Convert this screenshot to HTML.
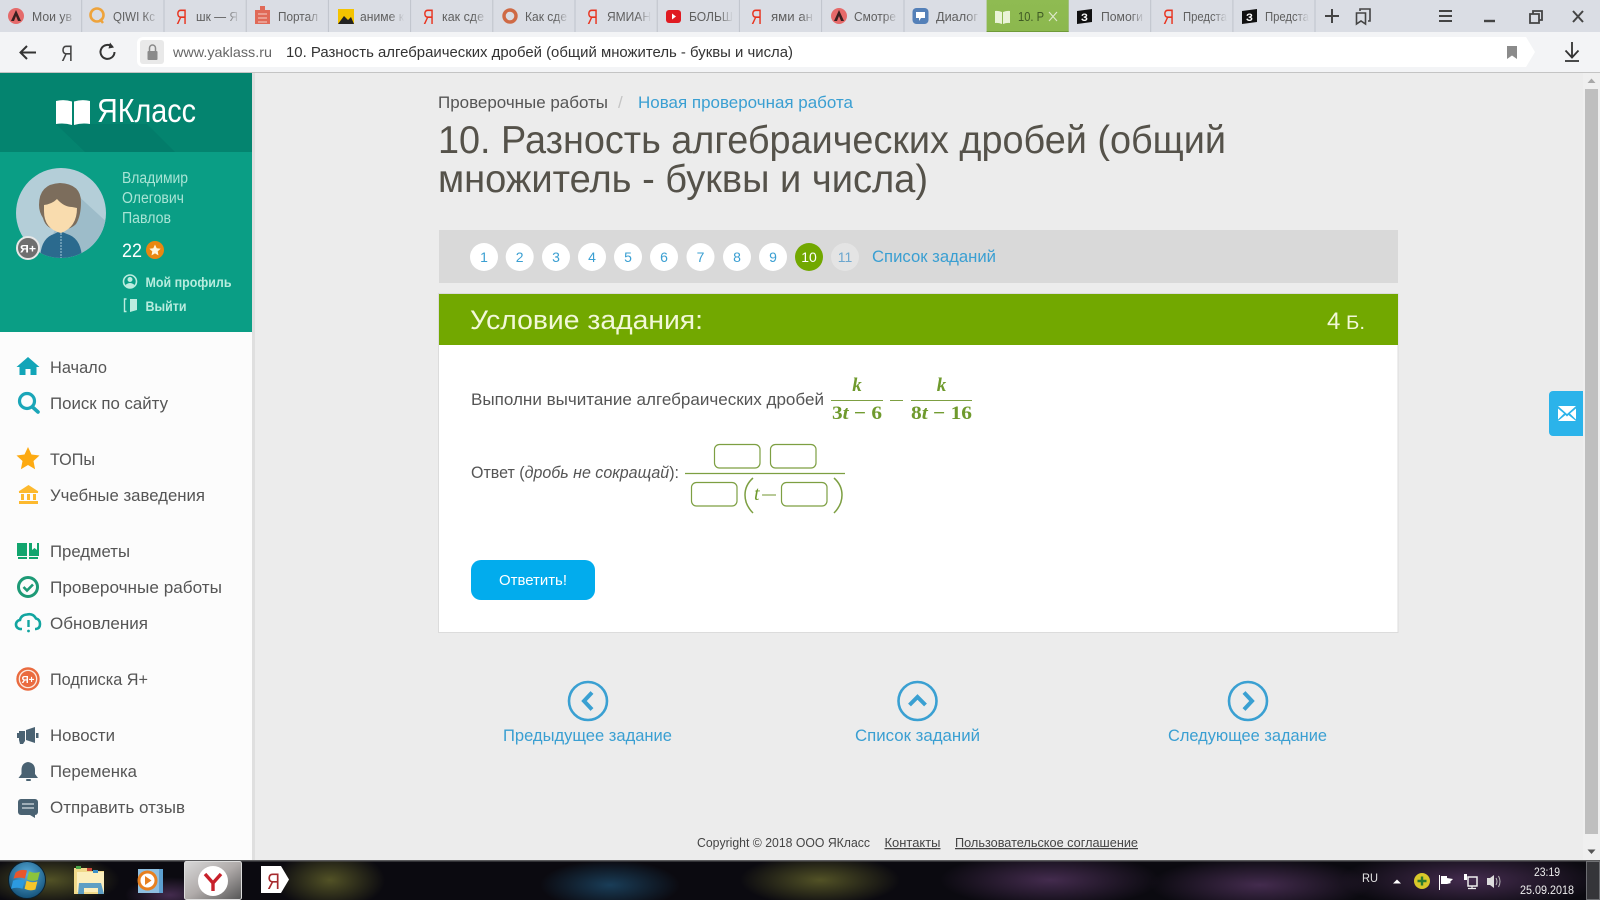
<!DOCTYPE html>
<html lang="ru"><head><meta charset="utf-8"><title>ЯКласс</title>
<style>
html,body{margin:0;padding:0;background:#ececec;width:1600px;height:900px;overflow:hidden}
svg{display:block}
text{font-family:"Liberation Sans","DejaVu Sans",sans-serif}
.tab{font-size:12.5px;fill:#5f5f5f}
.m{font-size:17px;fill:#555}
.b{fill:#3a9fd2}
.n{font-size:14px;fill:#3a9fd2;text-anchor:middle}
.math{font-family:"Liberation Serif",serif;font-weight:bold;fill:#6f9a2d;font-size:19px}
.inp{fill:#fff;stroke:#7d9f42;stroke-width:1.2}
</style></head><body>
<svg width="1600" height="900" viewBox="0 0 1600 900" xmlns="http://www.w3.org/2000/svg">
<defs>
<linearGradient id="f"><stop offset="0" stop-color="#dadde4" stop-opacity="0"/><stop offset=".75" stop-color="#dadde4"/></linearGradient>
<linearGradient id="act" x1="0" y1="0" x2="0" y2="1"><stop offset="0" stop-color="#8fbb52"/><stop offset="1" stop-color="#8cb84e"/></linearGradient>
<linearGradient id="tile" x1="0" y1="0" x2="1" y2="1"><stop offset="0" stop-color="#d8d8d8"/><stop offset=".5" stop-color="#b0abaa"/><stop offset="1" stop-color="#555"/></linearGradient>
<radialGradient id="orb" cx=".5" cy=".35" r=".7"><stop offset="0" stop-color="#58aede"/><stop offset="1" stop-color="#0f4a70"/></radialGradient>
<radialGradient id="o1"><stop offset="0" stop-color="#5a5a28" stop-opacity=".9"/><stop offset="1" stop-color="#5a5a28" stop-opacity="0"/></radialGradient>
<radialGradient id="o2"><stop offset="0" stop-color="#4a2f55" stop-opacity=".9"/><stop offset="1" stop-color="#4a2f55" stop-opacity="0"/></radialGradient>
<radialGradient id="o3"><stop offset="0" stop-color="#1d4a6a" stop-opacity=".8"/><stop offset="1" stop-color="#1d4a6a" stop-opacity="0"/></radialGradient>
<clipPath id="av"><circle cx="61" cy="213" r="45"/></clipPath>
<clipPath id="tb"><rect x="0" y="860" width="1600" height="40"/></clipPath>
</defs>

<!-- page background -->
<rect width="1600" height="900" fill="#ececec"/>

<!-- tab strip -->
<rect width="1600" height="32" fill="#dadde4"/>
<g stroke="#bfc3cb" stroke-width="1">
<path d="M81.7 0V32M164 0V32M246.2 0V32M328.4 0V32M410.6 0V32M492.8 0V32M575 0V32M657.2 0V32M739.4 0V32M821.6 0V32M904 0V32M1150.7 0V32M1232.9 0V32M1315 0V32M1068.5 0V32"/>
</g>
<rect x="986.6" y="0" width="82" height="32" fill="url(#act)"/>
<rect x="986.6" y="31" width="82" height="1" fill="#6f9a38"/>

<text class="tab" x="32" y="21" textLength="40" lengthAdjust="spacingAndGlyphs">Мои ув</text>
<text class="tab" x="113" y="21" textLength="42" lengthAdjust="spacingAndGlyphs">QIWI Кс</text>
<text class="tab" x="196" y="21" textLength="42" lengthAdjust="spacingAndGlyphs">шк — Я</text>
<text class="tab" x="278" y="21" textLength="40" lengthAdjust="spacingAndGlyphs">Портал</text>
<text class="tab" x="360" y="21" textLength="44" lengthAdjust="spacingAndGlyphs">аниме к</text>
<text class="tab" x="442" y="21" textLength="42" lengthAdjust="spacingAndGlyphs">как сде</text>
<text class="tab" x="525" y="21" textLength="42" lengthAdjust="spacingAndGlyphs">Как сде</text>
<text class="tab" x="607" y="21" textLength="44" lengthAdjust="spacingAndGlyphs">ЯМИАН</text>
<text class="tab" x="689" y="21" textLength="44" lengthAdjust="spacingAndGlyphs">БОЛЬШ</text>
<text class="tab" x="771" y="21" textLength="42" lengthAdjust="spacingAndGlyphs">ями ан</text>
<text class="tab" x="854" y="21" textLength="42" lengthAdjust="spacingAndGlyphs">Смотре</text>
<text class="tab" x="936" y="21" textLength="42" lengthAdjust="spacingAndGlyphs">Диалог</text>
<text class="tab" x="1101" y="21" textLength="42" lengthAdjust="spacingAndGlyphs">Помоги</text>
<text class="tab" x="1183" y="21" textLength="44" lengthAdjust="spacingAndGlyphs">Предста</text>
<text class="tab" x="1265" y="21" textLength="44" lengthAdjust="spacingAndGlyphs">Предста</text>
<g fill="url(#f)">
<rect x="62" y="2" width="19" height="29"/><rect x="144" y="2" width="19" height="29"/><rect x="226" y="2" width="19" height="29"/><rect x="308" y="2" width="19" height="29"/><rect x="390" y="2" width="19" height="29"/><rect x="473" y="2" width="19" height="29"/><rect x="555" y="2" width="19" height="29"/><rect x="637" y="2" width="19" height="29"/><rect x="719" y="2" width="19" height="29"/><rect x="801" y="2" width="19" height="29"/><rect x="884" y="2" width="19" height="29"/><rect x="966" y="2" width="19" height="29"/><rect x="1131" y="2" width="19" height="29"/><rect x="1213" y="2" width="19" height="29"/><rect x="1295" y="2" width="19" height="29"/>
</g>
<text x="1018" y="21" font-size="12.5" fill="#3f5a24" textLength="26" lengthAdjust="spacingAndGlyphs">10. Р</text>
<path d="M1049 12l8 9M1057 12l-8 9" stroke="#dfe9cc" stroke-width="1.100"/>

<!-- tab icons -->
<circle cx="16" cy="16" r="8" fill="#e56a6a"/><path d="M16 10l-5 11h3l2-5 2 5h3z" fill="#3a2020"/>
<circle cx="97" cy="15" r="6.5" fill="none" stroke="#eea33b" stroke-width="2.6"/><path d="M100 19l3 4" stroke="#eea33b" stroke-width="2.4"/>
<text x="176" y="24" font-size="21" fill="#e8331f" textLength="11" lengthAdjust="spacingAndGlyphs">Я</text>
<rect x="255" y="10" width="15" height="14" fill="#e06a58"/><rect x="260" y="6" width="5" height="5" fill="#e06a58"/><path d="M258 14h9M258 18h9M258 22h9" stroke="#f5d0c8"/>
<rect x="338" y="9" width="16" height="15" fill="#f4c300"/><path d="M338 24l6-8 4 4 3-3 3 7z" fill="#222"/>
<text x="423" y="24" font-size="21" fill="#e8331f" textLength="11" lengthAdjust="spacingAndGlyphs">Я</text>
<circle cx="510" cy="16" r="6" fill="none" stroke="#cf6a45" stroke-width="3.4"/>
<text x="587" y="24" font-size="21" fill="#e8331f" textLength="11" lengthAdjust="spacingAndGlyphs">Я</text>
<rect x="666" y="10" width="15" height="13" rx="3" fill="#e01b22"/><path d="M672 13.5l4 3-4 3z" fill="#fff"/>
<text x="751" y="24" font-size="21" fill="#e8331f" textLength="11" lengthAdjust="spacingAndGlyphs">Я</text>
<circle cx="839" cy="16" r="8" fill="#e56a6a"/><path d="M839 10l-5 11h3l2-5 2 5h3z" fill="#3a2020"/>
<rect x="912.500" y="8" width="16" height="16" rx="4" fill="#5480b8"/><path d="M916 12h9v6h-4l-2 3v-3h-3z" fill="#fff"/>
<path d="M995 11q3-.5 7 1v12q-4-1.500-7-1zM1010 11q-3-.5-7 1v12q4-1.500 7-1z" fill="#eaf3d8"/>
<path d="M1077 11l15-2v13l-15 2z" fill="#111"/><text x="1081" y="21" font-size="11" font-weight="bold" fill="#fff">З</text>
<text x="1163" y="24" font-size="21" fill="#e8331f" textLength="11" lengthAdjust="spacingAndGlyphs">Я</text>
<path d="M1242 11l15-2v13l-15 2z" fill="#111"/><text x="1246" y="21" font-size="11" font-weight="bold" fill="#fff">З</text>

<!-- window controls -->
<path d="M1332 9V23M1325 16H1339" stroke="#444" stroke-width="2"/>
<path d="M1360 11V9h10v12h-2M1356.500 13h9v11l-4.500-3-4.500 3z" fill="none" stroke="#444" stroke-width="1.600"/>
<path d="M1439 11h13M1439 16h13M1439 21h13" stroke="#444" stroke-width="2"/>
<path d="M1484 21h11" stroke="#444" stroke-width="2.400"/>
<path d="M1530 14h9v9h-9zM1533 14v-3h9v9h-3" fill="none" stroke="#444" stroke-width="1.800"/>
<path d="M1573 11l10 11M1583 11l-10 11" stroke="#444" stroke-width="2"/>

<!-- address bar -->
<rect y="32" width="1600" height="40" fill="#f3f4f6"/>
<rect y="72" width="1600" height="1" fill="#c4c4c4"/>
<path d="M143 37H1526L1535 52L1526 67H143a6 6 0 0 1-6-6V43a6 6 0 0 1 6-6z" fill="#fff"/>
<rect x="140" y="40" width="24" height="24" rx="3" fill="#e9e9e9"/>
<rect x="147.500" y="51" width="10" height="9" rx="1" fill="#8a8a8a"/><path d="M149.500 51v-3a3 3 0 0 1 6 0v3" fill="none" stroke="#8a8a8a" stroke-width="1.500"/>
<path d="M36 52.500H21M27 46l-6.500 6.500 6.500 6.500" fill="none" stroke="#333" stroke-width="2"/>
<text x="61" y="61" font-size="22" fill="#444" textLength="12" lengthAdjust="spacingAndGlyphs">Я</text>
<path d="M112.500 47a7 7 0 1 0 2 5" fill="none" stroke="#333" stroke-width="2"/><path d="M110 42.500l4 5-5.500 1z" fill="#333"/>
<text x="173" y="57" font-size="14" fill="#666" textLength="99" lengthAdjust="spacingAndGlyphs">www.yaklass.ru</text>
<text x="286" y="57" font-size="14.500" fill="#333" textLength="507" lengthAdjust="spacingAndGlyphs">10. Разность алгебраических дробей (общий множитель - буквы и числа)</text>
<path d="M1507 46h10v13l-5-3.500-5 3.500z" fill="#8b8b8b"/>
<path d="M1572 42V57M1565.500 50.500l6.500 7 6.500-7M1565 61h14" fill="none" stroke="#333" stroke-width="1.800"/>

<!-- sidebar -->
<rect x="252" y="73" width="3" height="787" fill="#dfdfdf"/>
<rect x="0" y="73" width="252" height="787" fill="#fcfcfc"/>
<rect x="0" y="73" width="252" height="79" fill="#04846f"/>
<path d="M56 124L85 152H175L147 124z" fill="#037766" opacity=".55"/>
<path d="M56 101q8-2 16 .5V125q-8-2.500-16-1zM90 101q-8-2-16 .5V125q8-2.500 16-1z" fill="#fff"/>
<text x="97" y="122" font-size="33" fill="#fff" textLength="99" lengthAdjust="spacingAndGlyphs">ЯКласс</text>
<rect x="0" y="152" width="252" height="180" fill="#0a9e85"/>

<!-- avatar -->
<circle cx="61" cy="213" r="45" fill="#b4ced8"/>
<g clip-path="url(#av)">
<path d="M74 192L110 225V260H70L50 240z" fill="#9dbcc9"/>
<path d="M40 258q1-20 14-24l6-3 7 3q14 4 15 24z" fill="#2b6a8e"/>
<path d="M61 233v25" stroke="#a4c8d8" stroke-width="1" stroke-dasharray="2 1"/>
</g>
<path d="M39 205q0-21 21-22 21 1 21 19 0 14-5 22-6 6-16 6-14 0-17-12-4-6-4-13z" fill="#7c6d5c"/>
<path d="M44 205q8-1 13-6 7 8 15 8l5 1q0 19-16 25-17-4-17-22z" fill="#f9dcae"/>
<circle cx="28" cy="248" r="11" fill="#6f6f6f" stroke="#e8e8e8" stroke-width="2"/>
<text x="20" y="252.500" font-size="11" font-weight="bold" fill="#fff" textLength="16" lengthAdjust="spacingAndGlyphs">Я+</text>

<g fill="#a8e4d5" font-size="15.500">
<text x="122" y="183" textLength="66" lengthAdjust="spacingAndGlyphs">Владимир</text>
<text x="122" y="203" textLength="62" lengthAdjust="spacingAndGlyphs">Олегович</text>
<text x="122" y="223" textLength="49" lengthAdjust="spacingAndGlyphs">Павлов</text>
</g>
<text x="122" y="257" font-size="19" fill="#fff" textLength="20" lengthAdjust="spacingAndGlyphs">22</text>
<circle cx="155" cy="250" r="9" fill="#e98711"/>
<path d="M155 244.500l1.700 3.700 4 .5-3 2.700.8 4-3.500-2-3.500 2 .8-4-3-2.700 4-.5z" fill="#fff4dd"/>
<circle cx="130" cy="281.500" r="6.500" fill="none" stroke="#bcecdf" stroke-width="1.600"/><circle cx="130" cy="279.500" r="2.500" fill="#bcecdf"/><path d="M125.500 285q4.500-4 9 0l-2 2.500h-5z" fill="#bcecdf"/>
<text x="145.500" y="287" font-size="14" font-weight="bold" fill="#b8ecde" textLength="86" lengthAdjust="spacingAndGlyphs">Мой профиль</text>
<path d="M126.500 299h-2v12.500h2" fill="none" stroke="#bcecdf" stroke-width="1.400"/><path d="M130 299h7v11l-7 2z" fill="#bcecdf"/>
<text x="145.500" y="311" font-size="14" font-weight="bold" fill="#b8ecde" textLength="41" lengthAdjust="spacingAndGlyphs">Выйти</text>

<!-- menu -->
<g class="menu">
<text class="m" x="50" y="373" textLength="57" lengthAdjust="spacingAndGlyphs">Начало</text>
<text class="m" x="50" y="409" textLength="118" lengthAdjust="spacingAndGlyphs">Поиск по сайту</text>
<text class="m" x="50" y="465" textLength="45" lengthAdjust="spacingAndGlyphs">ТОПы</text>
<text class="m" x="50" y="501" textLength="155" lengthAdjust="spacingAndGlyphs">Учебные заведения</text>
<text class="m" x="50" y="557" textLength="80" lengthAdjust="spacingAndGlyphs">Предметы</text>
<text class="m" x="50" y="593" textLength="172" lengthAdjust="spacingAndGlyphs">Проверочные работы</text>
<text class="m" x="50" y="629" textLength="98" lengthAdjust="spacingAndGlyphs">Обновления</text>
<text class="m" x="50" y="685" textLength="98" lengthAdjust="spacingAndGlyphs">Подписка Я+</text>
<text class="m" x="50" y="741" textLength="65" lengthAdjust="spacingAndGlyphs">Новости</text>
<text class="m" x="50" y="777" textLength="87" lengthAdjust="spacingAndGlyphs">Переменка</text>
<text class="m" x="50" y="813" textLength="135" lengthAdjust="spacingAndGlyphs">Отправить отзыв</text>
</g>
<path d="M16.500 367L28 357l11.500 10H36.500v8h-6v-6h-5v6h-6v-8z" fill="#12a5b8"/>
<circle cx="27" cy="401" r="7.500" fill="none" stroke="#1ba6b8" stroke-width="3.200"/><path d="M32.500 407l5.500 5" stroke="#1ba6b8" stroke-width="3.600" stroke-linecap="round"/>
<path d="M28 447l3.500 7.500 8 1-6 5.500 1.600 8.200L28 465l-7.100 4.200 1.600-8.200-6-5.500 8-1z" fill="#fdaa12"/>
<path d="M28.500 485l10 6.500h-20z M19 491.500h19v1.500H19z M21 494h3v6h-3zM27 494h3v6h-3zM33 494h3v6h-3z M19 501h19v3H19z" fill="#fdb92e"/>
<path d="M17 543h10v13H17zM29 543h3v7l2.500-2 2.500 2v-7h2v13H29z" fill="#12a56e"/><path d="M18 558h9M29 558h9" stroke="#12a56e" stroke-width="2"/>
<circle cx="28" cy="587" r="9.500" fill="none" stroke="#1d9a76" stroke-width="3"/><path d="M23.500 587l3.500 3.500 6-6" fill="none" stroke="#1d9a76" stroke-width="2.600"/>
<g transform="translate(1 0)"><path d="M21 629h-1a4.500 4.500 0 0 1 -1-9q1-5 7-5.500 6-1.500 9 4 4 1 4 5.500t-4 5h-1" fill="none" stroke="#12a5a0" stroke-width="2.600"/><path d="M27.500 620v7" stroke="#12a5a0" stroke-width="2.400"/><circle cx="27.500" cy="631" r="1.400" fill="#12a5a0"/></g>
<circle cx="28" cy="679" r="10.500" fill="#fbe9df" stroke="#ea6b3f" stroke-width="2.400"/><circle cx="28" cy="679" r="8" fill="#ea6b3f"/>
<text x="21.500" y="683" font-size="10" font-weight="bold" fill="#fff" textLength="13" lengthAdjust="spacingAndGlyphs">Я+</text>
<path d="M19 731h6v10l-2 3h-3l-1-4zM26 730l9-3v16l-9-3z" fill="#4a6272"/><rect x="17" y="733" width="2" height="5" fill="#4a6272"/><rect x="36" y="733" width="2.500" height="5" fill="#4a6272"/>
<path d="M28 762q7 1 7 8v4l3 4H18.500l3-4v-4q0-7 6.500-8z" fill="#4a6272"/><rect x="26" y="779" width="5" height="2" rx="1" fill="#4a6272"/>
<rect x="18" y="799" width="20" height="16" rx="3" fill="#4a6272"/><path d="M30 815h5v3z" fill="#4a6272"/><path d="M22 804h12M22 808h12" stroke="#bcc8ce" stroke-width="1.400"/>

<!-- breadcrumb + title -->
<text x="438" y="108" font-size="17" fill="#555" textLength="170" lengthAdjust="spacingAndGlyphs">Проверочные работы</text>
<text x="618" y="108" font-size="17" fill="#c4c4c4">/</text>
<text class="b" x="638" y="108" font-size="17" textLength="215" lengthAdjust="spacingAndGlyphs">Новая проверочная работа</text>
<text x="438" y="153" font-size="38.500" fill="#55524a" textLength="788" lengthAdjust="spacingAndGlyphs">10. Разность алгебраических дробей (общий</text>
<text x="438" y="192" font-size="38.500" fill="#55524a" textLength="490" lengthAdjust="spacingAndGlyphs">множитель - буквы и числа)</text>

<!-- task pager -->
<rect x="439" y="230" width="959" height="53" fill="#d9d9d9"/>
<g fill="#fff">
<circle cx="484" cy="257" r="14"/><circle cx="519.700" cy="257" r="14"/><circle cx="556" cy="257" r="14"/><circle cx="592" cy="257" r="14"/><circle cx="628" cy="257" r="14"/><circle cx="664" cy="257" r="14"/><circle cx="700.500" cy="257" r="14"/><circle cx="737" cy="257" r="14"/><circle cx="773" cy="257" r="14"/>
</g>
<circle cx="809" cy="257" r="14" fill="#72a800"/>
<circle cx="845" cy="257" r="14" fill="#e4e4e4"/>
<text class="n" x="484" y="262">1</text><text class="n" x="519.700" y="262">2</text><text class="n" x="556" y="262">3</text><text class="n" x="592" y="262">4</text><text class="n" x="628" y="262">5</text><text class="n" x="664" y="262">6</text><text class="n" x="700.500" y="262">7</text><text class="n" x="737" y="262">8</text><text class="n" x="773" y="262">9</text>
<text class="n" x="809" y="262" style="fill:#fff">10</text><text class="n" x="845" y="262" style="fill:#6ca7cf">11</text>
<text class="b" x="872" y="262" font-size="17" textLength="124" lengthAdjust="spacingAndGlyphs">Список заданий</text>

<!-- task card -->
<rect x="438.500" y="293.500" width="959.500" height="339" fill="#fff" stroke="#dcdcdc"/>
<rect x="439" y="294" width="959" height="51" fill="#72a800"/>
<text x="470" y="329" font-size="26.500" fill="#f2f8d8" textLength="233" lengthAdjust="spacingAndGlyphs">Условие задания:</text>
<text x="1327" y="329" font-size="24" fill="#f2f8d8">4</text>
<text x="1346" y="329" font-size="19" fill="#f2f8d8" textLength="19" lengthAdjust="spacingAndGlyphs">Б.</text>

<text class="m" x="471" y="405" textLength="353" lengthAdjust="spacingAndGlyphs">Выполни вычитание алгебраических дробей</text>
<text class="math" x="857" y="391" text-anchor="middle" font-style="italic">k</text>
<path d="M831 400.500H883M890 400.500H903M911 400.500H972" stroke="#7d9f42" stroke-width="1"/>
<text class="math" x="832" y="419" textLength="50" lengthAdjust="spacingAndGlyphs">3<tspan font-style="italic">t</tspan> − 6</text>
<text class="math" x="941.500" y="391" text-anchor="middle" font-style="italic">k</text>
<text class="math" x="911" y="419" textLength="61" lengthAdjust="spacingAndGlyphs">8<tspan font-style="italic">t</tspan> − 16</text>

<text class="m" x="471" y="478" textLength="208" lengthAdjust="spacingAndGlyphs">Ответ (<tspan font-style="italic">дробь не сокращай</tspan>):</text>
<path d="M685 473.500H845" stroke="#7d9f42" stroke-width="1.200"/>
<rect class="inp" x="714.500" y="444.500" width="45.500" height="23.500" rx="5"/>
<rect class="inp" x="770.500" y="444.500" width="45.500" height="23.500" rx="5"/>
<rect class="inp" x="691.500" y="482.500" width="45.500" height="23.500" rx="5"/>
<rect class="inp" x="781.500" y="482.500" width="45.500" height="23.500" rx="5"/>
<path d="M753 478q-8 7-8 17t8 18M834 478q8 7 8 17t-8 18" fill="none" stroke="#7d9f42" stroke-width="1.500"/>
<text x="754" y="500" font-size="20" font-style="italic" fill="#6f9a2d" style="font-family:'Liberation Serif',serif">t</text>
<path d="M762 495h14" stroke="#7d9f42" stroke-width="1.100"/>

<rect x="471" y="560" width="124" height="40" rx="10" fill="#02aced"/>
<text x="499" y="585" font-size="14.500" fill="#fff" textLength="68" lengthAdjust="spacingAndGlyphs">Ответить!</text>

<!-- prev/list/next -->
<g fill="none" stroke="#3aa0d2" stroke-width="2.600">
<circle cx="588" cy="701" r="19"/><circle cx="917.500" cy="701" r="19"/><circle cx="1248" cy="701" r="19"/>
</g>
<g fill="none" stroke="#3aa0d2" stroke-width="4">
<path d="M592 692.500l-8 8.500 8 8.500"/><path d="M909.500 705l8-8 8 8"/><path d="M1244 692.500l8 8.500-8 8.500"/>
</g>
<g class="b" font-size="17">
<text x="503" y="741" textLength="169" lengthAdjust="spacingAndGlyphs">Предыдущее задание</text>
<text x="855" y="741" textLength="125" lengthAdjust="spacingAndGlyphs">Список заданий</text>
<text x="1168" y="741" textLength="159" lengthAdjust="spacingAndGlyphs">Следующее задание</text>
</g>
<g font-size="12.500" fill="#444">
<text x="697" y="847" textLength="173" lengthAdjust="spacingAndGlyphs">Copyright © 2018 ООО ЯКласс</text>
<text x="884.500" y="847" textLength="56" lengthAdjust="spacingAndGlyphs" text-decoration="underline">Контакты</text>
<text x="955" y="847" textLength="183" lengthAdjust="spacingAndGlyphs" text-decoration="underline">Пользовательское соглашение</text>
</g>

<!-- mail button, scrollbar -->
<path d="M1583 391H1553a4 4 0 0 0-4 4v37a4 4 0 0 0 4 4h30z" fill="#2bb3ea"/>
<path d="M1558 406h18l-9 8zM1558 408.500l6 5-6 6zM1576 408.500l-6 5 6 6zM1558 421l7.500-6 1.500 1.500 1.500-1.500 7.500 6z" fill="#fff"/>
<rect x="1583" y="73" width="17" height="787" fill="#efefef"/>
<rect x="1585" y="89" width="13" height="745" fill="#bfbfbf"/>
<path d="M1587.500 83l4-4.500 4 4.500z" fill="#a8a8a8"/>
<path d="M1587.500 849.500l4 4.500 4-4.500z" fill="#555"/>

<!-- taskbar -->
<rect y="860" width="1600" height="40" fill="#0b0a10"/>
<g clip-path="url(#tb)">
<ellipse cx="50" cy="880" rx="70" ry="26" fill="url(#o1)"/>
<ellipse cx="170" cy="895" rx="45" ry="18" fill="url(#o2)"/>
<ellipse cx="330" cy="880" rx="55" ry="30" fill="url(#o1)"/>
<ellipse cx="610" cy="885" rx="70" ry="25" fill="url(#o3)"/>
<ellipse cx="820" cy="880" rx="80" ry="26" fill="url(#o1)"/>
<ellipse cx="1050" cy="880" rx="110" ry="28" fill="url(#o2)"/>
<ellipse cx="1260" cy="885" rx="110" ry="28" fill="url(#o2)"/>
<ellipse cx="1470" cy="880" rx="130" ry="30" fill="url(#o2)"/>
</g>
<rect y="860" width="1600" height="1.500" fill="#5a5a5c"/>
<circle cx="27" cy="880" r="18.500" fill="url(#orb)" stroke="#0a2030" stroke-width="1"/>
<g transform="translate(27 880) scale(1.350) translate(-25 -881)"><path d="M16.500 875.500q4-3 8.500-1.500l-1.500 6q-4-1.500-8.500 0z" fill="#e8562b"/><path d="M26.500 874.500q4 2 8 .5l-1.500 6q-4 1.500-8-.500z" fill="#8cc43c"/><path d="M14.700 881.500q4-1.500 8.500 0l-1.500 6q-4-1.500-8.500 0z" fill="#2c9ae0"/><path d="M24.700 881.500q4 2 8 .5l-1.500 6q-4 1.500-8-.500z" fill="#f6c52a"/></g>
<path d="M74 868h14l2 3h14v23H74z" fill="#f0d98a"/><rect x="77" y="872" width="27" height="20" fill="#fbeebc"/><path d="M79 883h22l3 11h-6v-6H84v6h-6z" fill="#5d9ec4"/>
<rect x="76" y="866" width="5" height="3" fill="#4ca84a"/><rect x="87" y="868" width="5" height="3" fill="#c8473a"/><rect x="93" y="870" width="5" height="3" fill="#3b8fc7"/>
<rect x="138" y="869" width="25" height="24" fill="#5c9fd0"/><rect x="138" y="869" width="21" height="24" fill="#8ebfe0"/><circle cx="147.500" cy="880.500" r="10" fill="#e7801f"/><circle cx="147.500" cy="880.500" r="7" fill="#fff"/><path d="M145 876l6.500 4.500-6.500 4.500z" fill="#e7801f"/>
<rect x="184.500" y="861.500" width="57" height="38" rx="2" fill="url(#tile)" stroke="#ddd"/>
<circle cx="213" cy="881" r="15" fill="#fff"/><path d="M205 874l8 9v8M221 874l-8 9" fill="none" stroke="#c8202a" stroke-width="3.400"/>
<path d="M261 866h20l8 13.500-8 13.500h-20z" fill="#fff"/><text x="267" y="889" font-size="22" fill="#a62a2e" textLength="13" lengthAdjust="spacingAndGlyphs">Я</text>

<text x="1362" y="882" font-size="12" fill="#e4e4e4" textLength="16" lengthAdjust="spacingAndGlyphs">RU</text>
<path d="M1393 883.500l4-4 4 4z" fill="#fff"/>
<circle cx="1422" cy="881" r="8" fill="#d9c82a"/><path d="M1422 876.500v9M1417.500 881h9" stroke="#2b7a2e" stroke-width="2.400"/>
<path d="M1439.500 875v15" stroke="#fff" stroke-width="1"/><path d="M1441 876h6v2l6 1-3 3 1 1-4 1h-6z" fill="#fff"/>
<rect x="1468" y="877" width="9" height="9" fill="none" stroke="#eee" stroke-width="1.500"/><rect x="1464" y="874" width="3" height="6" fill="#fff"/><path d="M1472 886v2M1468 888.500h8" stroke="#eee" stroke-width="1.200"/>
<path d="M1487 878h3l4-3v13l-4-3h-3z" fill="#ddd"/><path d="M1496 878q2 3.500 0 7M1498.500 876q3 5.500 0 11" fill="none" stroke="#bbb" stroke-width="1"/>
<text x="1534" y="876" font-size="12" fill="#eee" textLength="26" lengthAdjust="spacingAndGlyphs">23:19</text>
<text x="1520" y="894" font-size="12" fill="#eee" textLength="54" lengthAdjust="spacingAndGlyphs">25.09.2018</text>
<rect x="1586.500" y="861.500" width="13" height="38" fill="#3a3a3e" stroke="#77787c" opacity=".9"/>
</svg>
</body></html>
